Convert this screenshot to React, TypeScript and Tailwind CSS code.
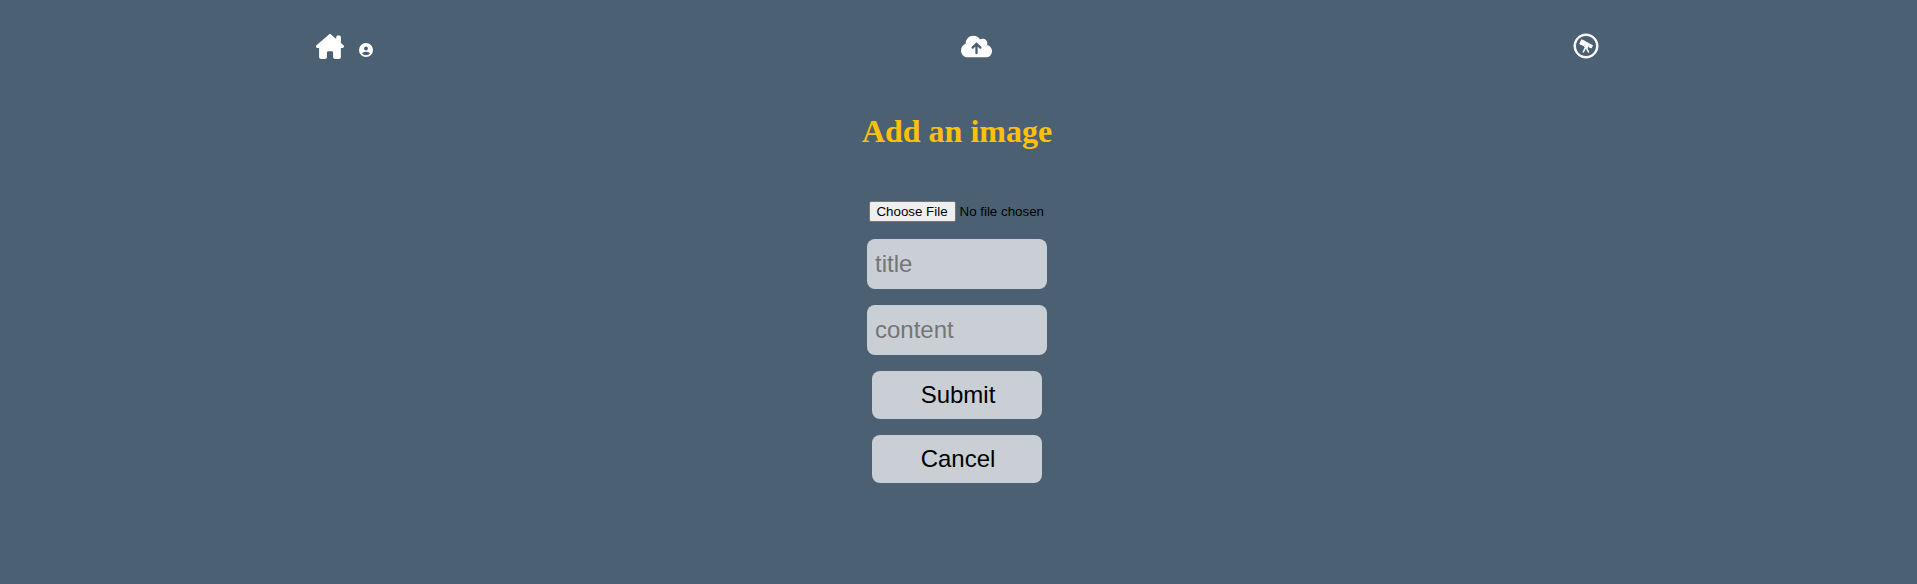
import { FaHouseChimney, FaCircleUser, FaCloudArrowUp, FaWpexplorer } from "react-icons/fa6";

export default function App() {
  return (
    <div className="flex min-h-screen flex-col bg-[#4b6073]">
      <nav className="flex h-[92px] justify-between pr-[319px] pl-[316px] pt-[34px] text-white">
        <div className="flex items-start">
          <a href="#home"><FaHouseChimney className="h-[25px] w-7" /></a>
          <a href="#profile" className="ml-[15px] mt-[9px]"><FaCircleUser className="size-[14px]" /></a>
        </div>
        <a href="#upload" className="-mr-[5px]"><FaCloudArrowUp className="h-[25px] w-[31px]" /></a>
        <a href="#explore"><FaWpexplorer className="size-6 overflow-visible" stroke="currentColor" strokeWidth={20} /></a>
      </nav>
      <main className="flex flex-col items-center pr-[3px] font-['Liberation_Sans',sans-serif]">
        <h1 className="mt-[21px] h-[37px] font-['Liberation_Serif',serif] text-[32px] leading-[37px] font-bold text-[#ffc107]">
          Add an image
        </h1>
        <form className="mt-[51px] flex flex-col items-center">
          <label className="mr-[2px] flex h-[21px] w-[175px] items-center gap-1 whitespace-nowrap text-[13.333px] text-black">
            <span className="flex h-[21px] w-[87px] shrink-0 items-center justify-center rounded-[2px] border border-[#767676] bg-[#efefef]">Choose File</span>
            <span>No file chosen</span>
            <input type="file" className="hidden" />
          </label>
          <input placeholder="title" className="mt-[17px] h-[50px] w-[180px] rounded-lg bg-[#c9cfd5] px-2 text-2xl text-black placeholder:text-[#757575]" />
          <input placeholder="content" className="mt-4 h-[50px] w-[180px] rounded-lg bg-[#c9cfd5] px-2 text-2xl text-black placeholder:text-[#757575]" />
          <button type="button" className="mt-4 h-12 w-[170px] rounded-lg bg-[#c9cfd5] pl-[2px] text-2xl text-black">Submit</button>
          <button type="button" className="mt-4 h-12 w-[170px] rounded-lg bg-[#c9cfd5] pl-[2px] text-2xl text-black">Cancel</button>
        </form>
      </main>
    </div>
  );
}
